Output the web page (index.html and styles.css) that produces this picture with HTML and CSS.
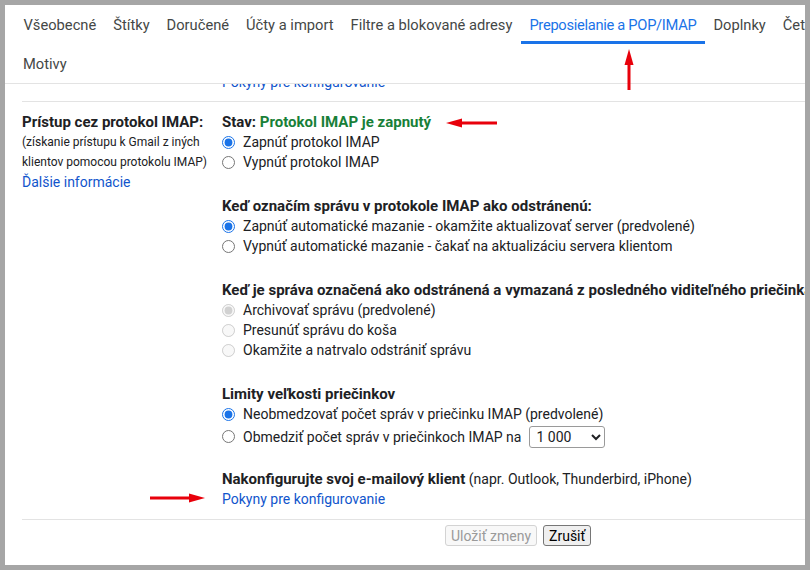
FILE: index.html
```html
<!DOCTYPE html>
<html lang="sk">
<head>
<meta charset="utf-8">
<title>Nastavenia – Preposielanie a POP/IMAP</title>
<link rel="stylesheet" href="styles.css">
</head>
<body>
<div class="window">
  <div class="page">
    <nav class="tabs">
      <div class="tab-row">
        <a class="tab">Všeobecné</a>
        <a class="tab">Štítky</a>
        <a class="tab">Doručené</a>
        <a class="tab">Účty a import</a>
        <a class="tab">Filtre a blokované adresy</a>
        <a class="tab active">Preposielanie a POP/IMAP</a>
        <a class="tab">Doplnky</a>
        <a class="tab">Čet a Meet</a>
        <a class="tab">Rozšírené</a>
      </div>
      <div class="tab-row">
        <a class="tab">Motivy</a>
      </div>
    </nav>

    <div class="content">
      <div class="fragment"><a class="link fragment-link">Pokyny pre konfigurovanie</a></div>

      <section class="imap">
        <div class="label-col">
          <div class="label-title">Prístup cez protokol IMAP:</div>
          <div class="label-note">(získanie prístupu k Gmail z iných</div>
          <div class="label-note">klientov pomocou protokolu IMAP)</div>
          <a class="link">Ďalšie informácie</a>
        </div>

        <div class="opts-col">
          <div class="group">
            <div class="line"><b>Stav: </b><b class="ok">Protokol IMAP je zapnutý</b></div>
            <label class="opt"><input type="radio" name="imap" checked><span>Zapnúť protokol IMAP</span></label>
            <label class="opt"><input type="radio" name="imap"><span>Vypnúť protokol IMAP</span></label>
          </div>

          <div class="group">
            <div class="line"><b>Keď označím správu v protokole IMAP ako odstránenú:</b></div>
            <label class="opt"><input type="radio" name="exp" checked><span>Zapnúť automatické mazanie - okamžite aktualizovať server (predvolené)</span></label>
            <label class="opt"><input type="radio" name="exp"><span>Vypnúť automatické mazanie - čakať na aktualizáciu servera klientom</span></label>
          </div>

          <div class="group">
            <div class="line"><b>Keď je správa označená ako odstránená a vymazaná z posledného viditeľného priečinka IMAP:</b></div>
            <label class="opt"><input type="radio" name="del" checked disabled><span>Archivovať správu (predvolené)</span></label>
            <label class="opt"><input type="radio" name="del" disabled><span>Presunúť správu do koša</span></label>
            <label class="opt"><input type="radio" name="del" disabled><span>Okamžite a natrvalo odstrániť správu</span></label>
          </div>

          <div class="group">
            <div class="line"><b>Limity veľkosti priečinkov</b></div>
            <label class="opt"><input type="radio" name="lim" checked><span>Neobmedzovať počet správ v priečinku IMAP (predvolené)</span></label>
            <label class="opt opt-select"><input type="radio" name="lim"><span>Obmedziť počet správ v priečinkoch IMAP na</span>
              <select class="sel"><option>1 000</option><option>2 000</option><option>5 000</option><option>10 000</option></select>
            </label>
          </div>

          <div class="group group-last">
            <div class="line"><b>Nakonfigurujte svoj e-mailový klient</b> (napr. Outlook, Thunderbird, iPhone)</div>
            <a class="link">Pokyny pre konfigurovanie</a>
          </div>
        </div>
      </section>

      <div class="actions">
        <button class="btn" disabled>Uložiť zmeny</button>
        <button class="btn">Zrušiť</button>
      </div>
    </div>
  </div>

  <svg class="annot" width="800" height="560" viewBox="0 0 800 560" aria-hidden="true">
    <g fill="#e8000b">
      <rect x="456" y="116.5" width="36" height="3"/>
      <polygon points="441,118 457,113.5 457,122.5"/>
      <rect x="622.5" y="58" width="3" height="27"/>
      <polygon points="624,44 619.5,60 628.5,60"/>
      <rect x="145" y="491.5" width="40" height="3"/>
      <polygon points="200,493 184,488.5 184,497.5"/>
    </g>
  </svg>
</div>
</body>
</html>
```

FILE: styles.css
```css
html, body {
  margin: 0;
  padding: 0;
}

body {
  background: #a6a6a6;
  padding: 5px;
  width: 810px;
  height: 570px;
  box-sizing: border-box;
  font-family: Roboto, "Liberation Sans", Arial, sans-serif;
  font-size: 14px;
  color: #202124;
}

.window {
  position: relative;
  width: 800px;
  height: 560px;
  background: #fff;
  overflow: hidden;
}

.page {
  width: 1000px;
}

/* Tabs */
.tabs {
  width: 800px;
  border-bottom: 1px solid #e3e3e3;
}

.tab-row {
  display: flex;
  white-space: nowrap;
  padding-left: 10px;
  height: 39px;
}

.tab {
  display: flex;
  align-items: center;
  padding: 3px 8.5px 0;
  font-size: 14.7px;
  color: #444746;
  border-bottom: 3px solid transparent;
  box-sizing: border-box;
}

.tab-row + .tab-row .tab {
  padding-left: 8px;
}

.tab.active {
  color: #1a73e8;
  border-bottom-color: #1a73e8;
  letter-spacing: -0.3px;
}

/* Content */
.content {
  padding-left: 17px;
  width: 783px;
}

.link {
  color: #1155cc;
  text-decoration: none;
  line-height: 20px;
  display: block;
}

.fragment {
  height: 17px;
  overflow: hidden;
  padding-left: 200px;
}

.fragment-link {
  margin-top: -12px;
}

.imap {
  display: grid;
  grid-template-columns: 200px 1fr;
  border-top: 1px solid #e3e3e3;
  border-bottom: 1px solid #e3e3e3;
  padding: 10px 0 10px;
  line-height: 20px;
  white-space: nowrap;
}

.label-title {
  font-weight: 700;
  font-size: 15px;
}

.label-note {
  font-size: 12px;
}

.group + .group {
  margin-top: 24px;
}

.group-last {
  margin-top: 21px !important;
}

.line b {
  font-weight: 700;
  font-size: 15px;
}

.ok {
  color: #188038;
}

.opt {
  display: flex;
  align-items: center;
  gap: 8px;
  height: 20px;
}

.opt input {
  margin: 0;
  width: 13px;
  height: 13px;
  accent-color: #1a73e8;
}

.opt-select {
  height: 23px;
  margin-top: 1px;
  gap: 0;
}

.opt-select span {
  margin-left: 8px;
  margin-right: 8px;
}

.sel {
  width: 76px;
  height: 22px;
  font-family: inherit;
  font-size: 14px;
  color: #202124;
  border: 1px solid #9a9a9a;
  border-radius: 3px;
  background: #fff;
  padding: 0 2px;
}

.actions {
  display: flex;
  gap: 6px;
  padding: 5px 0 0 423px;
}

.btn {
  font-family: inherit;
  font-size: 14px;
  height: 21px;
  padding: 0 5px;
  border: 1px solid #767676;
  border-radius: 3px;
  background: #efefef;
  color: #000;
}

.btn:disabled {
  border-color: #d3d3d3;
  background: #f8f8f8;
  color: #9a9a9a;
}

.annot {
  position: absolute;
  left: 0;
  top: 0;
  pointer-events: none;
}
```
